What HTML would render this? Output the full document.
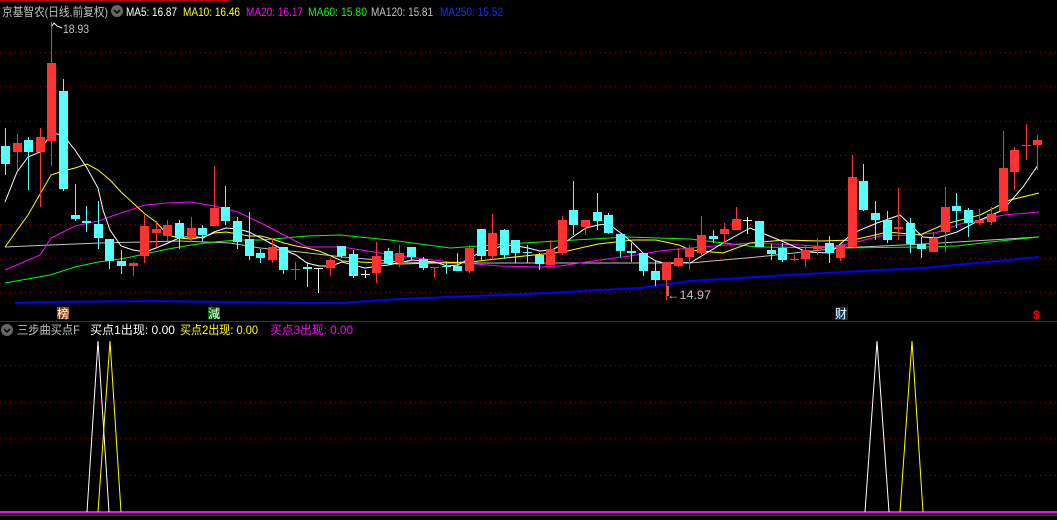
<!DOCTYPE html>
<html><head><meta charset="utf-8"><style>
html,body{margin:0;padding:0;background:#000;width:1057px;height:520px;overflow:hidden}
svg{display:block}
text{font-family:"Liberation Sans","Noto Sans CJK SC",sans-serif;font-size:12px}
</style></head><body>
<svg id="s" width="1057" height="520" viewBox="0 0 1057 520" xmlns="http://www.w3.org/2000/svg">
<rect width="1057" height="520" fill="#000"/>
<line x1="0" y1="0.5" x2="230" y2="0.5" stroke="#b00" stroke-width="1"/>
<g id="grid"></g>
<g id="mas" fill="none" stroke-width="1"></g>
<g id="candles"></g>
<line x1="0" y1="321.5" x2="1057" y2="321.5" stroke="#b00000"/>
<line x1="0" y1="515.5" x2="1057" y2="515.5" stroke="#b00000"/>
<line x1="0" y1="512" x2="1057" y2="512" stroke="#ff00ff" stroke-width="2"/>
<polyline points="87,512 98,341 109,512" fill="none" stroke="#fff"/>
<polyline points="98,512 110,341 121,512" fill="none" stroke="#ff0"/>
<polyline points="865,512 877,341 889,512" fill="none" stroke="#fff"/>
<polyline points="900,512 912,341 923,512" fill="none" stroke="#ff0"/>
<polyline points="52,26 54,23 57,26 62,28" fill="none" stroke="#fff"/>
<text x="63" y="33" fill="#c0c0c0" textLength="26" lengthAdjust="spacingAndGlyphs">18.93</text>
<line x1="668" y1="286" x2="668" y2="296" stroke="#fff"/>
<text x="667" y="299" fill="#c0c0c0" textLength="44" lengthAdjust="spacingAndGlyphs">←14.97</text>
<text x="2" y="16" fill="#c0c0c0" font-size="13" textLength="106" lengthAdjust="spacingAndGlyphs">京基智农(日线,前复权)</text>
<circle cx="117" cy="11" r="6" fill="#666"/>
<path d="M114 10 L117 13 L120 10" stroke="#000" stroke-width="1.5" fill="none"/>
<text x="126" y="16" fill="#fff" textLength="51" lengthAdjust="spacingAndGlyphs">MA5: 16.87</text>
<text x="183" y="16" fill="#ff0" textLength="57" lengthAdjust="spacingAndGlyphs">MA10: 16.46</text>
<text x="246" y="16" fill="#f0f" textLength="57" lengthAdjust="spacingAndGlyphs">MA20: 16.17</text>
<text x="308" y="16" fill="#0f0" textLength="59" lengthAdjust="spacingAndGlyphs">MA60: 15.80</text>
<text x="371" y="16" fill="#c0c0c0" textLength="62" lengthAdjust="spacingAndGlyphs">MA120: 15.81</text>
<text x="440" y="16" fill="#1030ff" textLength="63" lengthAdjust="spacingAndGlyphs">MA250: 15.52</text>
<rect x="57" y="307" width="12" height="12" fill="#8b4513"/>
<text x="57" y="318" fill="#fff">榜</text>
<rect x="208" y="307" width="12" height="12" fill="#006400"/>
<text x="208" y="318" fill="#fff">減</text>
<rect x="835" y="307" width="13" height="13" fill="#0a3060"/>
<text x="835" y="318" fill="#fff">财</text>
<text x="1033" y="319" fill="#f00" font-weight="bold">$</text>
<circle cx="7" cy="330" r="6" fill="#666"/>
<path d="M4 329 L7 332 L10 329" stroke="#000" stroke-width="1.5" fill="none"/>
<text x="17" y="334" fill="#c0c0c0" textLength="63" lengthAdjust="spacingAndGlyphs">三步曲买点F</text>
<text x="90" y="334" fill="#fff" textLength="85" lengthAdjust="spacingAndGlyphs">买点1出现: 0.00</text>
<text x="180" y="334" fill="#ff0" textLength="78" lengthAdjust="spacingAndGlyphs">买点2出现: 0.00</text>
<text x="270" y="334" fill="#f0f" textLength="83" lengthAdjust="spacingAndGlyphs">买点3出现: 0.00</text>
</svg>
<script>
var NS="http://www.w3.org/2000/svg";
function el(p,t,a){var e=document.createElementNS(NS,t);for(var k in a)e.setAttribute(k,a[k]);p.appendChild(e);return e;}
var g=document.getElementById('grid');
[52,86,121,155,189,224,258,292,365,402,438,475].forEach(function(y){el(g,'line',{x1:0,y1:y+.5,x2:1057,y2:y+.5,stroke:'#a00000','stroke-dasharray':'1 4'});});
var C=[[128,146,164,175,'c'],[134,143,152,170,'r'],[137,140,152,190,'c'],[128,137,152,207,'r'],[22,63,141,166,'r'],[79,91,189,191,'c'],[184,215,219,221,'c'],[206,221,223,232,'c'],[201,224,238,249,'c'],[239,239,261,269,'c'],[250,261,266,274,'c'],[262,263,266,276,'r'],[215,226,256,263,'r'],[221,229,233,247,'r'],[220,225,236,241,'r'],[220,223,238,249,'c'],[217,228,238,242,'r'],[225,228,235,242,'c'],[166,208,226,226,'r'],[186,207,221,225,'c'],[217,221,242,249,'c'],[212,239,256,260,'c'],[249,253,258,263,'c'],[238,247,260,263,'r'],[247,247,270,274,'c'],[262,269,270,280,'r'],[262,267,269,287,'c'],[268,268,269,293,'w'],[259,260,268,276,'r'],[246,246,256,258,'c'],[250,254,276,278,'c'],[270,274,275,278,'w'],[242,256,273,283,'r'],[248,251,263,265,'c'],[245,253,263,267,'r'],[247,247,257,260,'c'],[257,259,268,270,'c'],[267,267,268,278,'r'],[263,266,267,274,'c'],[253,266,271,271,'c'],[245,248,271,273,'r'],[229,229,256,260,'c'],[214,233,256,260,'r'],[229,230,255,259,'c'],[240,240,253,263,'c'],[245,252,253,263,'c'],[253,255,264,270,'c'],[240,249,265,266,'r'],[216,220,253,255,'r'],[181,210,225,235,'c'],[220,220,227,235,'r'],[193,212,221,230,'c'],[213,215,233,234,'c'],[234,234,251,257,'c'],[243,251,253,262,'c'],[253,253,271,276,'c'],[261,271,280,286,'c'],[262,262,280,300,'r'],[248,258,266,267,'r'],[245,248,257,270,'r'],[216,235,253,257,'r'],[230,236,239,243,'c'],[223,229,234,243,'r'],[207,219,230,230,'r'],[217,220,221,234,'w'],[221,221,247,247,'c'],[244,250,254,260,'c'],[243,248,260,262,'c'],[255,259,260,261,'r'],[245,250,259,267,'r'],[238,246,249,255,'r'],[236,243,253,263,'c'],[245,245,258,261,'r'],[155,177,247,247,'r'],[164,181,210,211,'c'],[201,213,220,240,'c'],[211,220,240,243,'c'],[188,227,229,240,'r'],[218,223,244,253,'c'],[237,244,249,258,'c'],[232,238,252,252,'r'],[187,207,232,252,'r'],[193,206,211,228,'c'],[208,210,223,237,'c'],[209,220,223,225,'r'],[207,214,222,225,'r'],[131,168,211,211,'r'],[147,150,172,190,'r'],[124,145,146,160,'r'],[135,140,145,170,'r']];
var cg=document.getElementById('candles');
var col={c:'#54ffff',r:'#ff3232',w:'#ffffff'};
C.forEach(function(d,i){var x=Math.round(5+11.6*i);var c=col[d[4]];
el(cg,'line',{x1:x+.5,y1:d[0],x2:x+.5,y2:d[3],stroke:c});
var h=Math.max(1,d[2]-d[1]);el(cg,'rect',{x:x-4,y:d[1],width:9,height:h,fill:c});});
var M={
'#ffffff':[[5,202],[17,172],[28,157],[40,152],[51,133],[63,135],[75,150],[87,168],[98,188],[103,210],[110,230],[121,246],[133,250],[145,252],[156,248],[168,243],[179,238],[191,236],[203,238],[214,232],[226,228],[238,229],[249,232],[261,238],[272,244],[284,250],[296,255],[307,263],[319,266],[331,266],[342,262],[365,268],[388,265],[412,260],[423,261],[435,262],[447,266],[458,265],[470,258],[481,252],[493,249],[505,245],[517,246],[528,248],[540,251],[552,250],[563,244],[574,236],[586,228],[598,225],[609,224],[622,234],[633,243],[644,254],[656,261],[668,264],[679,262],[690,263],[723,243],[750,228],[784,242],[807,252],[830,253],[853,233],[877,223],[900,215],[923,237],[937,238],[957,232],[980,220],[1003,210],[1023,187],[1038,165]],
'#ffff00':[[5,247],[28,215],[51,175],[63,171],[75,168],[87,164],[98,170],[110,180],[121,192],[133,203],[145,214],[156,222],[168,235],[179,238],[191,239],[203,237],[214,233],[226,232],[238,234],[249,236],[261,236],[272,239],[284,243],[296,246],[307,248],[319,251],[331,256],[342,261],[400,264],[470,262],[505,258],[563,252],[598,244],[633,240],[656,240],[679,245],[690,250],[723,253],[750,243],[784,240],[820,241],[853,240],[888,232],[920,235],[945,224],[980,215],[1010,200],[1039,193]],
'#ff00ff':[[5,270],[40,255],[51,238],[75,226],[98,221],[121,213],[145,205],[168,203],[191,202],[214,206],[238,212],[261,223],[284,235],[307,247],[342,247],[400,256],[450,262],[500,266],[540,267],[560,266],[600,260],[630,256],[660,251],[690,248],[750,243],[800,245],[830,247],[853,243],[880,236],[910,235],[935,233],[960,224],[1004,215],[1039,212]],
'#00ff00':[[5,283],[50,275],[75,267],[98,262],[121,259],[145,254],[168,249],[191,245],[214,242],[238,240],[261,240],[284,238],[307,236],[340,235],[390,240],[450,248],[523,243],[627,237],[690,239],[757,247],[843,248],[923,247],[957,246],[990,242],[1039,237]],
'#c0c0c0':[[5,247],[50,245],[100,243],[180,241],[230,243],[260,248],[300,252],[343,257],[400,262],[450,263],[520,263],[600,263],[690,263],[757,257],[840,248],[923,244],[990,240],[1039,237]],
'#0000ff':[[15,303],[45,302],[150,301],[300,303],[340,303],[400,299],[450,297],[500,295],[550,293],[600,290],[640,288],[690,281],[823,273],[923,268],[1039,257]]};
var mg=document.getElementById('mas');
['#0000ff','#c0c0c0','#00ff00','#ff00ff','#ffff00','#ffffff'].forEach(function(c){el(mg,'polyline',{points:M[c].map(function(p){return p.join(',')}).join(' '),stroke:c,'stroke-width':c=='#0000ff'?2:1,fill:'none'});});
</script>
</body></html>
